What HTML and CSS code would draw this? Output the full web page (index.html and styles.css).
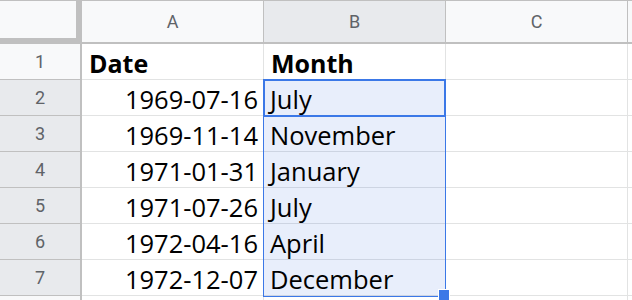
FILE: index.html
```html
<!DOCTYPE html>
<html>
<head>
<meta charset="utf-8">
<link rel="stylesheet" href="styles.css">
</head>
<body>
<div class="sheet">
  <div class="grid">
    <div class="corner"></div>
    <div class="colhead">A</div>
    <div class="colhead colhead-sel">B</div>
    <div class="colhead">C</div>
    <div class="colhead colhead-last"></div>

    <div class="rowhead">1</div>
    <div class="cell bold">Date</div>
    <div class="cell bold">Month</div>
    <div class="cell"></div>
    <div class="cell"></div>

    <div class="rowhead rowhead-sel">2</div>
    <div class="cell num">1969-07-16</div>
    <div class="cell sel">July</div>
    <div class="cell"></div>
    <div class="cell"></div>

    <div class="rowhead rowhead-sel">3</div>
    <div class="cell num">1969-11-14</div>
    <div class="cell sel">November</div>
    <div class="cell"></div>
    <div class="cell"></div>

    <div class="rowhead rowhead-sel">4</div>
    <div class="cell num">1971-01-31</div>
    <div class="cell sel">January</div>
    <div class="cell"></div>
    <div class="cell"></div>

    <div class="rowhead rowhead-sel">5</div>
    <div class="cell num">1971-07-26</div>
    <div class="cell sel">July</div>
    <div class="cell"></div>
    <div class="cell"></div>

    <div class="rowhead rowhead-sel">6</div>
    <div class="cell num">1972-04-16</div>
    <div class="cell sel">April</div>
    <div class="cell"></div>
    <div class="cell"></div>

    <div class="rowhead rowhead-sel">7</div>
    <div class="cell num">1972-12-07</div>
    <div class="cell sel">December</div>
    <div class="cell"></div>
    <div class="cell"></div>

    <div class="rowhead"></div>
    <div class="cell"></div>
    <div class="cell"></div>
    <div class="cell"></div>
    <div class="cell"></div>
  </div>
  <div class="range-outline"></div>
  <div class="active-cell"></div>
  <div class="fill-handle"></div>
</div>
</body>
</html>
```

FILE: styles.css
```css
html, body {
  margin: 0;
  padding: 0;
  background: #ffffff;
  overflow: hidden;
}

.sheet {
  position: relative;
  width: 632px;
  height: 300px;
  overflow: hidden;
}

.grid {
  display: grid;
  grid-template-columns: 82px 182px 182px 182px 60px;
  grid-template-rows: 44px repeat(8, 36px);
}

.grid > div {
  box-sizing: border-box;
}

.corner {
  background: #f8f9fa;
  border-top: 1px solid #c0c0c0;
  border-right: 6px solid #c0c0c0;
  border-bottom: 6px solid #c0c0c0;
}

.colhead {
  background: #f8f9fa;
  border-top: 1px solid #c0c0c0;
  border-right: 1px solid #c0c0c0;
  border-bottom: 2px solid #c0c0c0;
  display: flex;
  align-items: center;
  justify-content: center;
  font-family: Roboto, "Liberation Sans", sans-serif;
  font-size: 18px;
  color: #5f6368;
  padding-bottom: 1px;
}

.colhead-sel {
  background: #e8eaed;
}

.rowhead {
  background: #f8f9fa;
  border-right: 2px solid #c0c0c0;
  border-bottom: 1px solid #c0c0c0;
  display: flex;
  align-items: center;
  justify-content: center;
  font-family: Roboto, "Liberation Sans", sans-serif;
  font-size: 18px;
  color: #5f6368;
}

.rowhead-sel {
  background: #e8eaed;
}

.cell {
  border-right: 1px solid #e2e3e3;
  border-bottom: 1px solid #e2e3e3;
  display: flex;
  align-items: flex-end;
  padding: 0 7px 0 7px;
  font-family: "Open Sans", "Noto Sans", sans-serif;
  font-size: 25.5px;
  line-height: 31px;
  color: #000000;
  white-space: nowrap;
  overflow: hidden;
}

.bold {
  font-weight: 700;
  font-size: 25px;
}

.num {
  justify-content: flex-end;
  padding-right: 5px;
}

.sel {
  background: #e8eefb;
  border-bottom-color: #cdd4e2;
  padding-left: 6px;
}

.range-outline {
  position: absolute;
  left: 263px;
  top: 80px;
  width: 183px;
  height: 217px;
  box-sizing: border-box;
  border: 1px solid #3b78e7;
}

.active-cell {
  position: absolute;
  left: 263px;
  top: 79px;
  width: 183px;
  height: 38px;
  box-sizing: border-box;
  border: 2px solid #3b78e7;
}

.fill-handle {
  position: absolute;
  left: 438px;
  top: 289px;
  width: 12px;
  height: 12px;
  box-sizing: border-box;
  background: #3b78e7;
  border: 1px solid #ffffff;
}
```
